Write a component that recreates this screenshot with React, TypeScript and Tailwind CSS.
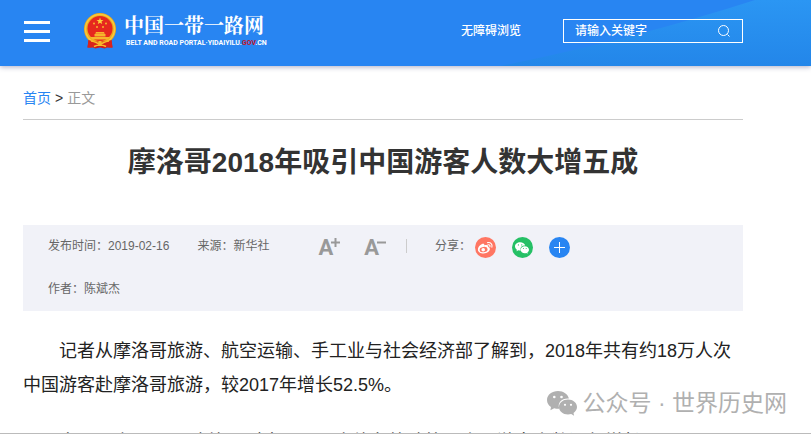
import { useState } from "react"

const FONT = "font-['Liberation_Sans','Noto_Sans_CJK_SC',sans-serif]"

function Emblem() {
  return (
    <svg viewBox="0 0 32 36" className="h-9 w-8 shrink-0" aria-hidden="true">
      <path d="M5 24 3.500 34.500 8 33.500 11 35.500 16 34.500 21 35.500 24 33.500 28.500 34.500 27 24Z" fill="#cf1f1c" />
      <circle cx="16" cy="16" r="16" fill="#efa81d" />
      <circle cx="16" cy="16" r="14.500" fill="none" stroke="#f8c93b" strokeWidth="1.500" />
      <circle cx="16" cy="15.500" r="12.500" fill="#e6281e" />
      <path d="m16 4.500.9 2.400 2.600.1-2 1.600.7 2.500-2.200-1.400-2.200 1.400.7-2.500-2-1.600 2.600-.1z" fill="#fbd13c" />
      <g fill="#f6b62c">
        <circle cx="10" cy="10.500" r="1" />
        <circle cx="22" cy="10.500" r="1" />
        <circle cx="13" cy="14" r="1" />
        <circle cx="19" cy="14" r="1" />
        <path d="M12 19h8l.8 1.800h-9.600zM10.500 21h11v2.500h-11zM6 24h20l-2.500 2.500h-15z" />
      </g>
      <path d="M4.500 27c5 2 18 2 23 0l1 7.500c-4 .5-9 0-12.500-2-3.500 2-8.500 2.500-12.500 2z" fill="#d8231c" />
      <path d="M7 28c3 .5 6 1 9 4 3-3 6-3.500 9-4M10 33.500c2-1 4-1.500 6-1.500s4 .5 6 1.500" fill="none" stroke="#f6bb2d" strokeWidth="1.500" />
      <circle cx="16" cy="29.500" r="1.800" fill="#f6bb2d" />
    </svg>
  )
}

function WechatIcon({ className, eyes }: { className: string; eyes: string }) {
  return (
    <svg viewBox="0 0 30 25" className={className} aria-hidden="true">
      <path d="M11 0C5 0 0 3.800 0 9c0 3 1.600 5.400 4 7l-.6 3.200 3.800-2c1.300.4 2.700.6 4.200.6h1C10 12 14.500 7.300 21 7.400h.9C21 3.300 16.500 0 11 0Z" fill="currentColor" />
      <path d="M21 8.600c-5 0-9 3.300-9 7.500s4 7.500 9 7.500c1.100 0 2.200-.2 3.200-.5l2.900 1.600-.6-2.700c2.100-1.300 3.500-3.500 3.500-5.900 0-4.200-4-7.500-9-7.500Z" fill="currentColor" />
      <g fill={eyes}>
        <circle cx="7.300" cy="6" r="1.300" />
        <circle cx="14.500" cy="6" r="1.300" />
        <circle cx="18" cy="13.800" r="1.100" />
        <circle cx="24" cy="13.800" r="1.100" />
      </g>
    </svg>
  )
}

function WeiboIcon() {
  return (
    <svg viewBox="0 0 20 20" className="size-5" aria-hidden="true">
      <path d="M9.200 7.300c.6-1.600-.8-2-2.600-1.100C4.400 7.300 2.900 9.400 2.900 11.400c0 2.500 2.700 4 5.700 4 3.700 0 6.300-2.200 6.300-4.300 0-1.200-.8-1.800-1.700-2 .5-1.800-.9-2.500-4-1.800Z" fill="#fff" />
      <ellipse cx="8.600" cy="11.600" rx="4" ry="2.700" transform="rotate(-8 8.600 11.600)" fill="#ff7663" />
      <circle cx="8.200" cy="11.800" r="1.800" fill="#fff" />
      <path d="M13 6.800c1.500-.3 2.300.7 1.900 2M12.600 4.600c3-.6 5.100 1.600 4.300 4.600" fill="none" stroke="#fff" strokeWidth="1.100" strokeLinecap="round" />
    </svg>
  )
}

function SiteHeader() {
  const [keyword, setKeyword] = useState("")

  return (
    <header className="relative h-[66px] bg-[#2885f2] shadow-[0_1px_5px_rgba(50,50,110,0.4)]">
      {/* light wedge in the right corner */}
      <svg viewBox="0 0 311 66" preserveAspectRatio="none" className="absolute top-0 right-0 h-full w-[311px]" aria-hidden="true">
        <defs>
          <linearGradient id="wedge" x1="0" y1="1" x2="0" y2="0">
            <stop offset="0" stopColor="#2386e9" />
            <stop offset="1" stopColor="#2b96f3" />
          </linearGradient>
        </defs>
        <path d="M0 66 C95 47 180 24 255 0 H311 V66Z" fill="url(#wedge)" />
      </svg>

      <div className="relative flex h-[62px] max-w-[743px] items-center pl-6">
        <button type="button" aria-label="菜单" className="flex w-[26px] flex-col gap-1.5">
          <span className="h-[3px] bg-white" />
          <span className="h-[3px] bg-white" />
          <span className="h-[3px] bg-white" />
        </button>

        <a href="#" className="ml-[34px] flex items-center gap-2 text-white">
          <Emblem />
          <span className="flex flex-col whitespace-nowrap">
            <span className="font-['Noto_Serif_CJK_SC','Noto_Sans_CJK_SC',serif] text-[20px] leading-6 font-bold">中国一带一路网</span>
            <span className="pl-0.5 font-['Roboto',sans-serif] text-[7px] leading-3 font-bold">
              BELT AND ROAD PORTAL·YIDAIYILU.<span className="text-[#c4182c]">GOV</span>.CN
            </span>
          </span>
        </a>

        <a href="#" className="ml-auto text-[12px] font-medium whitespace-nowrap text-white">无障碍浏览</a>

        <form onSubmit={e => e.preventDefault()} className="ml-[42px] flex h-6 w-[180px] items-center border border-white pr-[11px] pl-[11px]">
          <input
            aria-label="请输入关键字"
            placeholder="请输入关键字"
            value={keyword}
            onChange={e => setKeyword(e.target.value)}
            className="min-w-0 flex-1 bg-transparent text-[12px] font-medium text-white outline-none placeholder:text-white"
          />
          <button type="submit" aria-label="搜索" className="text-white">
            <svg viewBox="0 0 14 14" className="size-3.5" fill="none" stroke="currentColor" aria-hidden="true">
              <circle cx="6.500" cy="6.500" r="5" />
              <path d="m10.500 10.500 2 2" />
            </svg>
          </button>
        </form>
      </div>
    </header>
  )
}

function ArticleMeta() {
  return (
    <div className="mt-[41px] bg-[#f1f2f8] px-[25px] text-[12px] text-[#666]">
      <div className="flex h-[43px] items-center pb-0.5 whitespace-nowrap">
        <span>发布时间：2019-02-16</span>
        <span className="ml-7">来源：新华社</span>
        <button type="button" aria-label="放大字号" className="ml-[49px] flex pt-1 text-[#999]">
          <span className="font-['Roboto',sans-serif] text-[22px] leading-6 font-bold">A</span>
          <svg viewBox="0 0 9 9" className="mt-0.5 -ml-0.5 size-[9px]" stroke="currentColor" strokeWidth="2" aria-hidden="true"><path d="M0 4.500h9M4.500 0v9" /></svg>
        </button>
        <button type="button" aria-label="缩小字号" className="ml-6 flex pt-1 text-[#999]">
          <span className="font-['Roboto',sans-serif] text-[22px] leading-6 font-bold">A</span>
          <svg viewBox="0 0 9 9" className="mt-0.5 -ml-0.5 size-[9px]" stroke="currentColor" strokeWidth="2" aria-hidden="true"><path d="M0 4.500h9" /></svg>
        </button>
        <span className="ml-5 h-3.5 w-px bg-[#ccc]" />
        <span className="ml-7">分享：</span>
        <div className="ml-1 flex gap-4 pt-1">
          <button type="button" aria-label="微博" className="flex size-[21px] items-center justify-center rounded-full bg-[#ff7663]">
            <WeiboIcon />
          </button>
          <button type="button" aria-label="微信" className="flex size-[21px] items-center justify-center rounded-full bg-[#25c065] text-white">
            <WechatIcon className="h-3 w-3.5" eyes="#25c065" />
          </button>
          <button type="button" aria-label="更多" className="flex size-[21px] items-center justify-center rounded-full bg-[#2885f2]">
            <svg viewBox="0 0 11 11" className="size-[11px]" stroke="#fff" aria-hidden="true"><path d="M0 5.500h11M5.500 0v11" /></svg>
          </button>
        </div>
      </div>
      <p className="flex h-[43px] items-center pb-0.5">作者：陈斌杰</p>
    </div>
  )
}

export default function App() {
  return (
    <div className={`relative h-screen overflow-hidden border-b border-[#bbb] bg-white ${FONT}`}>
      <SiteHeader />

      <main className="max-w-[743px] pl-[23px]">
        <nav className="flex h-[54px] items-center gap-1 border-b border-[#ccc] pt-3 text-[14px] text-[#333]">
          <a href="#" className="text-[#2885f2]">首页</a>
          <span>&gt;</span>
          <span className="text-[#999]">正文</span>
        </nav>

        <h1 className="pt-[22px] text-center text-[28px] leading-[42px] font-bold text-[#333]">摩洛哥2018年吸引中国游客人数大增五成</h1>

        <ArticleMeta />

        <article className="mt-[23px] flex flex-col gap-[23px] text-[18px] leading-[34px] text-[#222]">
          <p className="indent-9">记者从摩洛哥旅游、航空运输、手工业与社会经济部了解到，2018年共有约18万人次中国游客赴摩洛哥旅游，较2017年增长52.5%。</p>
          <p className="indent-9">自2016年6月1日摩洛哥对中国公民实施免签政策以来，游客人数逐年增长。</p>
        </article>
      </main>

      <div className="absolute right-6 bottom-3.5 flex items-center gap-1.5 text-[#b0b0b0]">
        <WechatIcon className="h-[25px] w-[30px]" eyes="#fff" />
        <span className="text-[23px] leading-8">公众号 · 世界历史网</span>
      </div>
    </div>
  )
}
